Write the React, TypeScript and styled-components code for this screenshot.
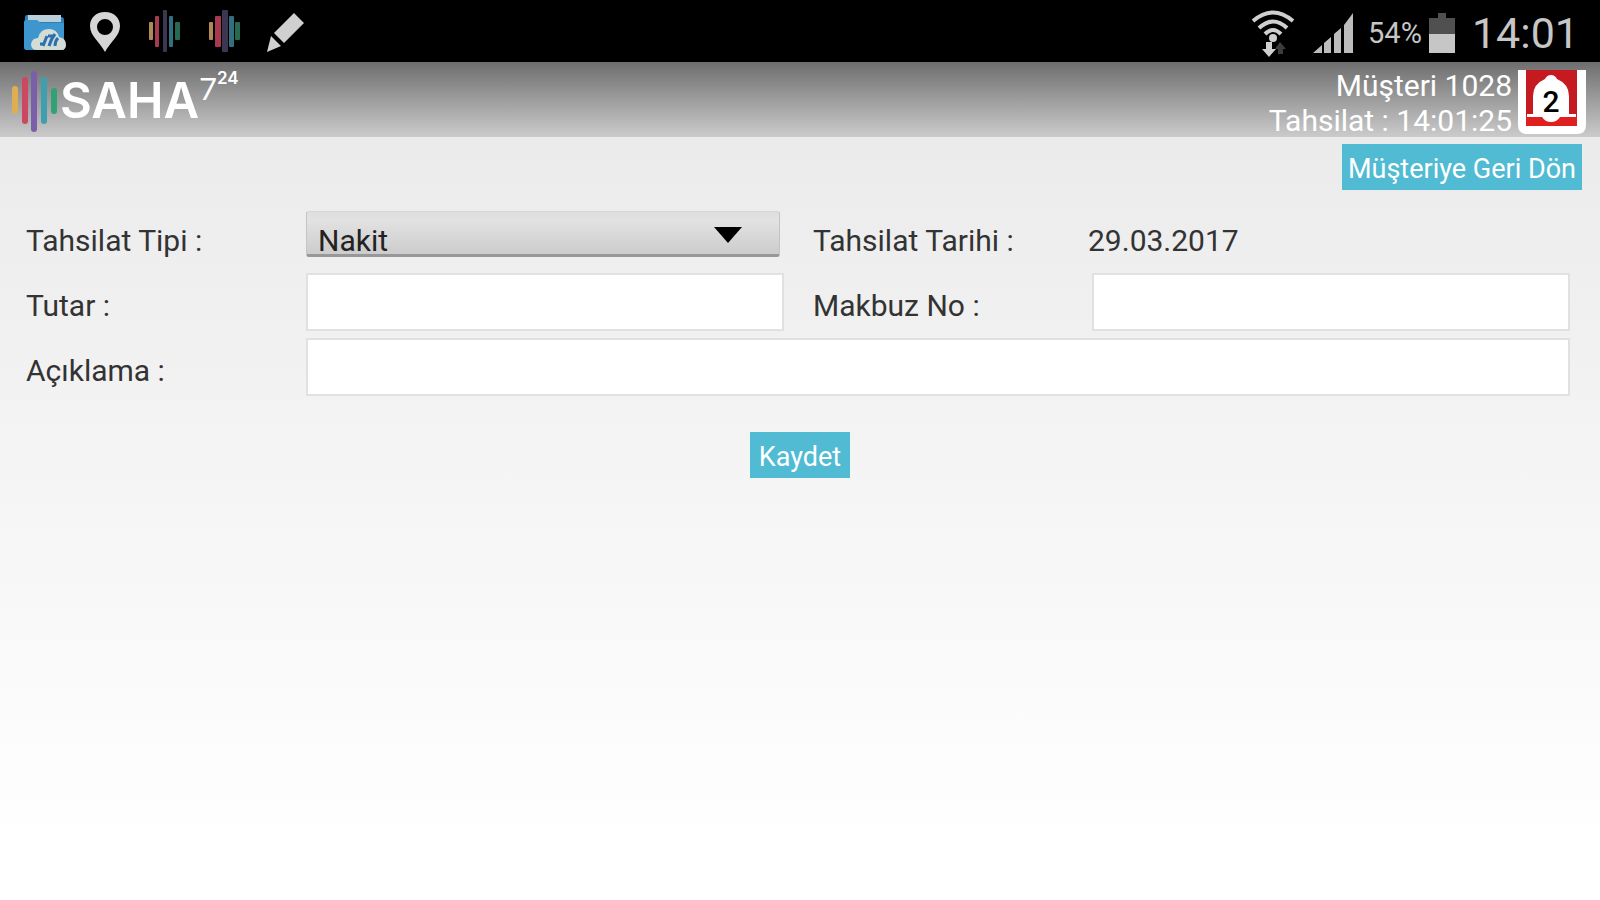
import React from "react";
import styled, { createGlobalStyle } from "styled-components";

const Global = createGlobalStyle`
  * { box-sizing: border-box; }
  body { margin: 0; background: #fff; font-family: Roboto, "Liberation Sans", sans-serif; }
  button, input, select { font-family: inherit; }
`;

const Screen = styled.div`
  min-height: 100vh;
  display: flex;
  flex-direction: column;
`;

const StatusBar = styled.div`
  display: flex;
  align-items: center;
  justify-content: space-between;
  height: 62px;
  padding: 0 21px 0 22px;
  background: #000;
  color: #c6c6c6;
`;

const IconGroup = styled.div`
  display: flex;
  align-items: center;
  gap: 16px;
`;

const StatusGroup = styled.div`
  display: flex;
  align-items: center;
  height: 62px;
  padding-top: 4px;
`;

const Icon = styled.svg<{ $gap?: number }>`
  display: block;
  flex: none;
  margin-right: ${(p) => p.$gap ?? 0}px;
`;

const Battery = styled.span`
  font-size: 29px;
  line-height: 32px;
  margin-right: 6px;
`;

const Clock = styled.span`
  font-size: 43px;
  line-height: 52px;
`;

const Header = styled.header`
  display: flex;
  justify-content: space-between;
  height: 75px;
  padding: 0 13px 0 8px;
  background: linear-gradient(#6e6e6e, #cbcbcb);
  color: #fff;
`;

const Brand = styled.a`
  display: flex;
  align-items: center;
  color: #fff;
  text-decoration: none;
`;

const Session = styled.div`
  display: flex;
  align-items: flex-start;
  gap: 4px;
`;

const SessionText = styled.div`
  padding-top: 6px;
  font-size: 30px;
  line-height: 35px;
  text-align: right;
`;

const AlertButton = styled.button`
  display: block;
  margin-top: 7px;
  padding: 0;
  border: 0;
  background: none;
`;

const Main = styled.main`
  flex: 1;
  background: linear-gradient(#ebebeb, #fff 710px);
`;

const Toolbar = styled.div`
  display: flex;
  justify-content: flex-end;
  padding: 7px 18px 0;
`;

const ActionButton = styled.button`
  min-width: 100px;
  height: 46px;
  padding: 4px 6px 0;
  border: 0;
  background: #50bbd3;
  color: #fff;
  font-size: 27px;
  line-height: 40px;
`;

const Form = styled.form`
  padding-top: 14px;
`;

const Fields = styled.div`
  display: grid;
  grid-template-columns: 276fr 482fr 304fr 482fr;
  grid-auto-rows: 65px;
  align-items: center;
  padding: 0 30px 0 26px;
  color: #333;
  font-size: 30px;
  line-height: 34px;
`;

const Label = styled.label<{ $second?: boolean }>`
  padding: 8px 0 0 ${(p) => (p.$second ? 29 : 0)}px;
`;

const DateValue = styled.output`
  padding-top: 8px;
`;

const TextField = styled.input<{ $wide?: boolean }>`
  grid-column: ${(p) => (p.$wide ? "span 3" : "auto")};
  min-width: 0;
  height: 58px;
  margin-left: 4px;
  padding: 8px 12px;
  border: 2px solid #e1e1e1;
  background: #fff;
  font-size: 30px;
`;

const SelectBox = styled.div`
  position: relative;
  height: 46px;
  margin: 0 4px 5px 4px;
`;

const Select = styled.select`
  appearance: none;
  display: block;
  width: 100%;
  height: 46px;
  padding: 15px 60px 0 11px;
  border: 1px solid #c4c4c4;
  border-top-color: #d6d6d6;
  border-bottom: 3px solid #989898;
  border-radius: 3px;
  background: linear-gradient(#dedede 0, #e2e2e2 20%, #cccccc 100%);
  color: #222;
  font-size: 30px;
  line-height: 27px;
`;

const Arrow = styled.svg`
  position: absolute;
  right: 38px;
  top: 16px;
  pointer-events: none;
`;

const Submit = styled.div`
  display: flex;
  justify-content: center;
  padding-top: 33px;
`;

const PulseIcon = ({ wide }: { wide?: boolean }) => (
  <Icon width="44" height="44" viewBox="0 0 44 44" aria-hidden="true">
    <rect x="7" y="13" width="4" height="18" rx="1" fill="#b08a50" />
    <rect x="13" y="7" width={wide ? 6 : 4} height="31" rx="1" fill="#a83a50" />
    <rect x={wide ? 20 : 21} y="1" width={wide ? 6 : 4} height="42" rx="1" fill="#3e3650" />
    <rect x="27" y="7" width={wide ? 5 : 4} height="31" rx="1" fill="#32707f" />
    <rect x="33" y="13" width="5" height="18" rx="1" fill="#266a52" />
  </Icon>
);

export default function App() {
  return (
    <Screen>
      <Global />
      <StatusBar>
        <IconGroup>
          <Icon width="46" height="44" viewBox="0 0 46 44" aria-hidden="true">
            <path d="M3 8q0-2 2-2h11l3 2h20q3 0 3 3v30H5q-3 0-3-3z" fill="#2c7fb8" />
            <path d="M6 6h33v7H6z" fill="#b9cfdc" />
            <path d="M4 11h11l4 3h23v27H5q-3 0-3-3V13q0-2 2-2z" fill="#3d96cd" />
            <path d="M15 41q-6 0-6-6 1-6 7-6 2-9 11-9 8 0 10 8 7 1 7 8 0 5-5 5z" fill="#d3dcd5" />
            <path d="M18 35h5M25 27l-4 10M33 25q-4 5-6 12M26 27h6M36 29q-3 3-3 8" stroke="#2a6fae" strokeWidth="3" fill="none" />
          </Icon>
          <Icon width="42" height="44" viewBox="0 0 42 44" aria-hidden="true">
            <path fillRule="evenodd" d="M21 3C12 3 6 9 6 17c0 10 10 16 15 26 5-10 15-16 15-26 0-8-6-14-15-14zm0 7a8 8 0 1 1 0 16 8 8 0 0 1 0-16z" fill="#d6d6d6" />
          </Icon>
          <PulseIcon />
          <PulseIcon wide />
          <Icon width="42" height="44" viewBox="0 0 42 44" aria-hidden="true">
            <path d="M32 4l10 10-20 20-10-10zM9 27l10 10-14 6z" fill="#d0d0d0" />
          </Icon>
        </IconGroup>
        <StatusGroup>
          <Icon $gap={17} width="44" height="48" viewBox="0 0 44 48" aria-hidden="true">
            <g fill="none" stroke="#cfcfcf" strokeWidth="4">
              <path d="M2 12Q22-5 42 12" />
              <path d="M8 19Q22 6 36 19" />
              <path d="M14 25Q22 17 30 25" />
            </g>
            <circle cx="22" cy="29" r="4" fill="#cfcfcf" />
            <path d="M15 33h6v7h4l-7 8-7-8h4z" fill="#d0d0d0" />
            <path d="M27 45h5v-5h3l-6-7-5 7h3z" fill="#3c3c3c" />
          </Icon>
          <Icon $gap={14} width="42" height="44" viewBox="0 0 42 44" aria-hidden="true">
            <path d="M1 42l9-8v8zM12 32l7-6v16h-7zM22 23l7-6v25h-7zM32 14l9-12v40h-9z" fill="#bcbcbc" />
          </Icon>
          <Battery>54%</Battery>
          <Icon $gap={16} width="28" height="42" viewBox="0 0 28 42" aria-hidden="true">
            <path d="M10 1h8v5h9v17H1V6h9z" fill="#505050" />
            <path d="M1 22h26v19H1z" fill="#c6c6c6" />
          </Icon>
          <Clock>14:01</Clock>
        </StatusGroup>
      </StatusBar>

      <Header>
        <Brand href="#" aria-label="SAHA 7 24">
          <svg width="240" height="74" viewBox="0 0 240 74">
            <g strokeWidth="6" strokeLinecap="round">
              <path d="M7 26v22" stroke="#dfae53" />
              <path d="M17 17v41" stroke="#cb4762" />
              <path d="M26 11v55" stroke="#7c5fa9" />
              <path d="M36 17v41" stroke="#3ea0ae" />
              <path d="M46 28v20" stroke="#31a176" />
            </g>
            <g fill="#fff">
              <text x="52" y="55" fontFamily="Inter, sans-serif" fontWeight="600" fontSize="49">SAHA</text>
              <text x="191" y="37" fontFamily="Lato, sans-serif" fontWeight="400" fontSize="31">7</text>
              <text x="209" y="21" fontFamily="Inter, sans-serif" fontWeight="600" fontSize="17">24</text>
            </g>
          </svg>
        </Brand>
        <Session>
          <SessionText>
            <div>Müşteri 1028</div>
            <div>Tahsilat : 14:01:25</div>
          </SessionText>
          <AlertButton type="button" aria-label="2">
            <svg width="71" height="66" viewBox="0 0 71 66">
              <path d="M2 1h68v55q0 9-9 9H11q-9 0-9-9z" fill="#fff" />
              <path d="M10 1h51v56H10z" fill="#c51a20" />
              <path d="M10 47h51v10H10z" fill="#e0201f" />
              <path d="M17 45V27q0-12 12-17 2-4 6-4t6 4q12 5 12 17v18h7v3H44q-3 5-9 5t-9-5H11v-3z" fill="#fff" />
              <text x="35" y="43" textAnchor="middle" fontFamily="Roboto, sans-serif" fontWeight="500" fontSize="30" fill="#000">2</text>
            </svg>
          </AlertButton>
        </Session>
      </Header>

      <Main>
        <Toolbar>
          <ActionButton type="button">Müşteriye Geri Dön</ActionButton>
        </Toolbar>
        <Form onSubmit={(e) => e.preventDefault()}>
          <Fields>
            <Label htmlFor="type">Tahsilat Tipi :</Label>
            <SelectBox>
              <Select id="type" defaultValue="Nakit">
                <option>Nakit</option>
              </Select>
              <Arrow width="28" height="16" viewBox="0 0 28 16" aria-hidden="true">
                <path d="M0 0h28L14 16z" fill="#000" />
              </Arrow>
            </SelectBox>
            <Label $second htmlFor="date">Tahsilat Tarihi :</Label>
            <DateValue id="date">29.03.2017</DateValue>
            <Label htmlFor="amount">Tutar :</Label>
            <TextField id="amount" type="text" />
            <Label $second htmlFor="receipt">Makbuz No :</Label>
            <TextField id="receipt" type="text" />
            <Label htmlFor="note">Açıklama :</Label>
            <TextField $wide id="note" type="text" />
          </Fields>
          <Submit>
            <ActionButton type="submit">Kaydet</ActionButton>
          </Submit>
        </Form>
      </Main>
    </Screen>
  );
}
